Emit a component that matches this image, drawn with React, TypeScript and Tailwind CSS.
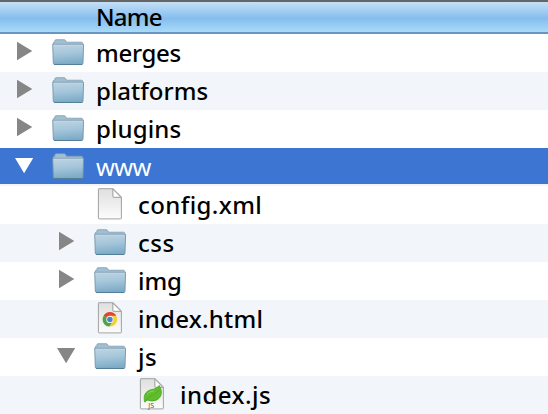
import React from "react";

type Kind = "folder" | "file" | "html" | "script";
type Arrow = "right" | "down" | "none";

interface Entry {
  name: string;
  kind: Kind;
  arrow: Arrow;
  indent: string;
  row: string;
  text: string;
}

const entries: Entry[] = [
  { name: "merges", kind: "folder", arrow: "right", indent: "pl-0", row: "bg-white", text: "tracking-[-0.3px]" },
  { name: "platforms", kind: "folder", arrow: "right", indent: "pl-0", row: "bg-[#f2f6fb]", text: "tracking-[0px]" },
  { name: "plugins", kind: "folder", arrow: "right", indent: "pl-0", row: "bg-white", text: "tracking-[0.1px]" },
  { name: "www", kind: "folder", arrow: "down", indent: "pl-0", row: "bg-[#3c76d2] border-b-2 border-[#f2f6fb] text-white", text: "tracking-[-0.6px]" },
  { name: "config.xml", kind: "file", arrow: "none", indent: "pl-[42px]", row: "bg-white", text: "tracking-[0.4px]" },
  { name: "css", kind: "folder", arrow: "right", indent: "pl-[42px]", row: "bg-[#f2f6fb]", text: "tracking-[0.5px]" },
  { name: "img", kind: "folder", arrow: "right", indent: "pl-[42px]", row: "bg-white", text: "tracking-[-0.1px]" },
  { name: "index.html", kind: "html", arrow: "none", indent: "pl-[42px]", row: "bg-[#f2f6fb]", text: "tracking-[0.25px]" },
  { name: "js", kind: "folder", arrow: "down", indent: "pl-[42px]", row: "bg-white", text: "tracking-[0.6px]" },
  { name: "index.js", kind: "script", arrow: "none", indent: "pl-[84px]", row: "bg-[#f2f6fb]", text: "tracking-[0.45px]" },
];

function Disclosure({ arrow, light }: { arrow: Arrow; light: boolean }) {
  return (
    <svg className="h-[38px] w-9 shrink-0" viewBox="0 0 36 38" fill={light ? "#fff" : "#868686"}>
      {arrow === "right" && <path d="M17 7.8 32.3 17 17 26.2Z" />}
      {arrow === "down" && <path d="M15 10h18.2L24.1 25.2Z" />}
    </svg>
  );
}

function FolderIcon() {
  return (
    <>
      <path d="M1.3 11V9q0-.8.8-.8h.8V6.9q0-1.2 1.2-1.2h8q1.1 0 1.6 1l.8 1.5h14.9q1.3 0 1.3 1.3V11Z" fill="#a0bfd2" stroke="#7f9db1" strokeWidth=".8" />
      <path d="M.7 10.3h30.9l-.6 18.8q-.1 1.3-1.3 1.3H2.6q-1.2 0-1.3-1.3Z" fill="url(#folder-face)" stroke="#7295aa" strokeWidth=".9" />
      <path d="M1.5 11.1h29.3" stroke="#cbdde8" strokeWidth=".7" />
      <path d="M2 30.5h28.3" stroke="#557f97" strokeWidth="1" />
    </>
  );
}

function Sheet() {
  return (
    <>
      <path d="M4.9 2.7h14.2l8.3 8.2v21.2q0 .8-.8.8H5.2q-.8 0-.8-.8V3.2q0-.5.5-.5Z" fill="url(#sheet-face)" stroke="#989898" strokeWidth=".9" />
      <path d="M18.9 3.1v7.6q0 .6.6.6h7.4Z" fill="#fff" stroke="#919191" strokeWidth=".9" />
    </>
  );
}

function ItemIcon({ kind }: { kind: Kind }) {
  return (
    <svg className="h-[38px] w-8 shrink-0" viewBox="0 0 32 38" fill="none">
      <defs>
        <linearGradient id="folder-face" x1="0" y1="0" x2=".15" y2="1">
          <stop stopColor="#bfd5e3" /><stop offset=".5" stopColor="#a5c6da" /><stop offset="1" stopColor="#7eacc8" />
        </linearGradient>
        <linearGradient id="sheet-face" x1="0" y1="0" x2="0" y2="1">
          <stop stopColor="#dfdfdf" /><stop offset="1" stopColor="#fcfcfc" />
        </linearGradient>
      </defs>
      {kind === "folder" ? <FolderIcon /> : <Sheet />}
      {kind === "html" && (
        <g>
          <circle cx="15.9" cy="19.4" r="7.2" fill="#f6cf31" />
          <path d="M15.9 19.4 9.7 15.7A7.2 7.2 0 0 1 22.2 15.8H15.9Z" fill="#dd4735" />
          <path d="M9.7 15.7A7.2 7.2 0 0 0 15.2 26.6L19 21.2 15.9 19.4Z" fill="#4aa34f" />
          <circle cx="15.9" cy="19.4" r="3.6" fill="#f6f8f6" />
          <circle cx="15.9" cy="19.4" r="2.75" fill="#4c83ca" />
        </g>
      )}
      {kind === "script" && (
        <g>
          <path d="M8.4 25.2C7.2 17.8 10.6 14.2 17.5 13.2Q21.5 12.4 23.2 9.4C26.8 15.5 25.8 21.3 20.8 23.9Q16 26.2 11 24L9 26.2Z" fill="#62bd2e" stroke="#43a421" strokeWidth=".8" />
          <path d="M9 25.4Q12.2 20.8 16.5 19.3 21.2 17.6 23.5 13.4" stroke="#4aa52b" strokeWidth=".7" />
          <path d="M11 18.2Q13.5 15.1 18 15" stroke="#86d657" strokeWidth=".9" />
          <text x="12.3" y="31.5" fontFamily="Open Sans, sans-serif" fontSize="7" fill="#444">JS</text>
        </g>
      )}
    </svg>
  );
}

export default function App() {
  return (
    <main className="h-[414px] w-[548px] overflow-hidden bg-white font-['Noto_Sans',sans-serif] text-black">
      <header className="flex h-[34px] items-start border-t-2 border-b-2 border-t-[#656565] border-b-[#6796c1] bg-linear-to-b from-[#c4dff6] via-[#85bdee] via-55% to-[#a9daf8] pl-24 text-2xl leading-[29px] font-medium">
        <span className="tracking-[-0.8px]">Name</span>
      </header>
      {entries.map((e) => (
        <div key={e.name} className={`flex h-[38px] items-start overflow-hidden ${e.row} ${e.indent}`}>
          <Disclosure arrow={e.arrow} light={e.name === "www"} />
          <div className="ml-4 flex">
            <ItemIcon kind={e.kind} />
            <span className={`ml-3 text-2xl leading-[37px] whitespace-nowrap ${e.name === "www" ? "font-normal" : "font-medium"} ${e.text}`}>{e.name}</span>
          </div>
        </div>
      ))}
    </main>
  );
}
